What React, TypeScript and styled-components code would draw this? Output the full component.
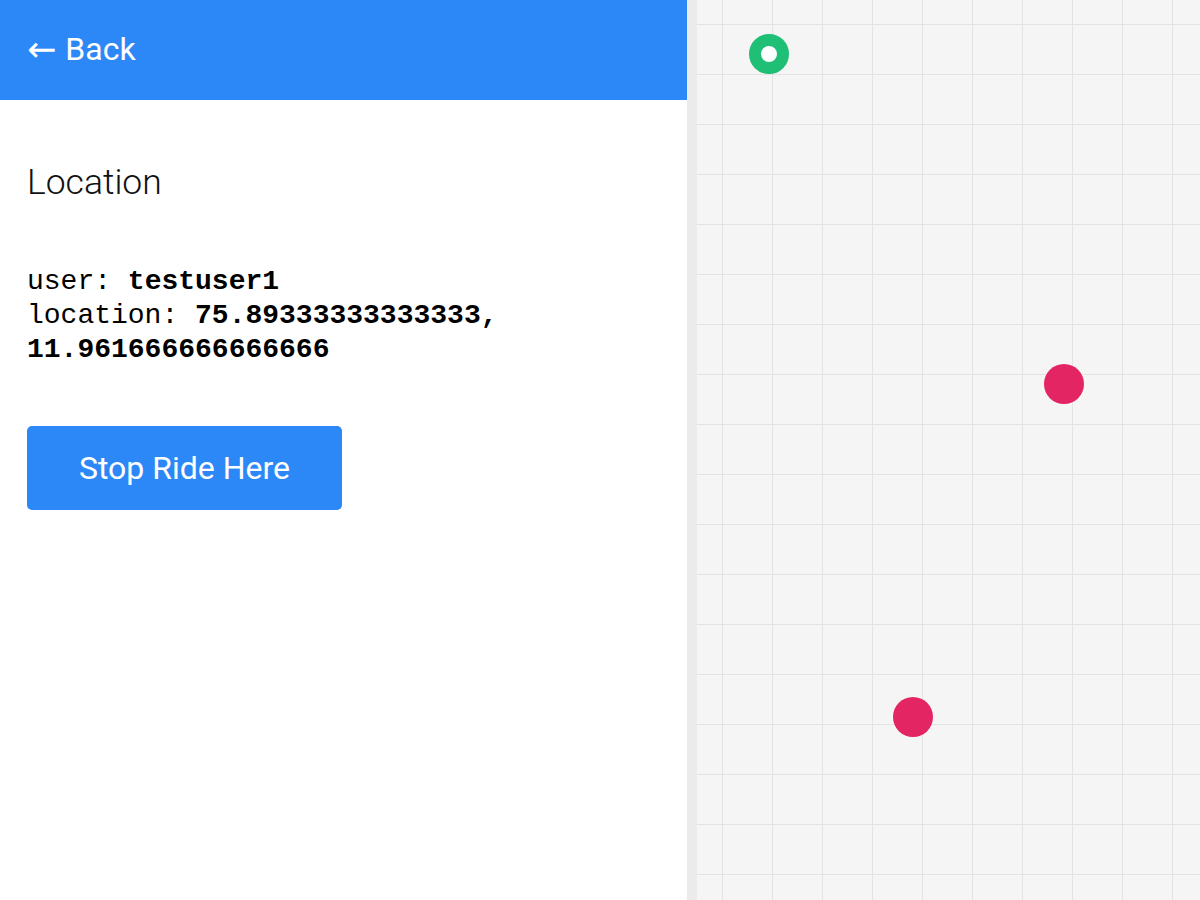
import React from 'react';
import styled, { createGlobalStyle } from 'styled-components';

const GlobalStyle = createGlobalStyle`
  html, body {
    margin: 0;
    padding: 0;
    height: 100%;
    overflow: hidden;
  }
  body {
    font-family: Roboto, "Liberation Sans", sans-serif;
    background: #fff;
  }
`;

const Layout = styled.div`
  display: flex;
  width: 1200px;
  height: 900px;
`;

const Sidebar = styled.div`
  width: 687px;
  flex: none;
  display: flex;
  flex-direction: column;
  background: #fff;
`;

const Header = styled.div`
  height: 100px;
  background: #2d88f7;
  display: flex;
  align-items: center;
  padding: 0 27px;
`;

const BackLink = styled.a`
  color: #fff;
  font-size: 32px;
  text-decoration: none;
  cursor: pointer;
  display: flex;
  align-items: center;
  margin-top: -2px;
`;

const Arrow = styled.span`
  font-family: "DejaVu Sans", sans-serif;
  font-size: 35px;
  margin-right: 9px;
  line-height: 1;
`;

const Content = styled.div`
  padding: 58px 27px 0;
  display: flex;
  flex-direction: column;
  align-items: flex-start;
`;

const Title = styled.h2`
  margin: 0;
  font-size: 35.5px;
  font-weight: 300;
  color: #111;
  line-height: 48px;
`;

const Info = styled.div`
  margin-top: 59px;
  font-family: "Liberation Mono", "Courier New", monospace;
  font-size: 28px;
  line-height: 34px;
  color: #000;
`;

const Line = styled.div`
  white-space: nowrap;
`;

const Value = styled.b`
  font-weight: 700;
`;

const StopButton = styled.button`
  margin-top: 59px;
  width: 315px;
  height: 84px;
  border: none;
  border-radius: 5px;
  background: #2d88f7;
  color: #fff;
  font-family: Roboto, "Liberation Sans", sans-serif;
  font-size: 32px;
  cursor: pointer;
`;

const MapArea = styled.div`
  position: relative;
  flex: 1;
  border-left: 10px solid #ebebeb;
  background-color: #f5f5f5;
  background-image:
    linear-gradient(to right, #e3e3e3 0, #e3e3e3 1px, transparent 1px),
    linear-gradient(to bottom, #e3e3e3 0, #e3e3e3 1px, transparent 1px);
  background-size: 50px 50px;
  background-position: 25px 24px;
  overflow: hidden;
`;

const Marker = styled.div<{ $kind: 'start' | 'rider' }>`
  position: absolute;
  width: 40px;
  height: 40px;
  margin: -20px 0 0 -20px;
  border-radius: 50%;
  box-sizing: border-box;
  background: ${p => (p.$kind === 'start' ? '#fff' : '#e42563')};
  border: ${p => (p.$kind === 'start' ? '12px solid #1fbf76' : 'none')};
`;

const markers = [
  { kind: 'start' as const, x: 72, y: 54 },
  { kind: 'rider' as const, x: 367, y: 384 },
  { kind: 'rider' as const, x: 216, y: 717 },
];

export default function App() {
  return (
    <>
      <GlobalStyle />
      <Layout>
        <Sidebar>
          <Header>
            <BackLink>
              <Arrow>←</Arrow>Back
            </BackLink>
          </Header>
          <Content>
            <Title>Location</Title>
            <Info>
              <Line>
                user: <Value>testuser1</Value>
              </Line>
              <Line>
                location: <Value>75.89333333333333,</Value>
              </Line>
              <Line>
                <Value>11.961666666666666</Value>
              </Line>
            </Info>
            <StopButton>Stop Ride Here</StopButton>
          </Content>
        </Sidebar>
        <MapArea>
          {markers.map((m, i) => (
            <Marker key={i} $kind={m.kind} style={{ left: m.x, top: m.y }} />
          ))}
        </MapArea>
      </Layout>
    </>
  );
}
